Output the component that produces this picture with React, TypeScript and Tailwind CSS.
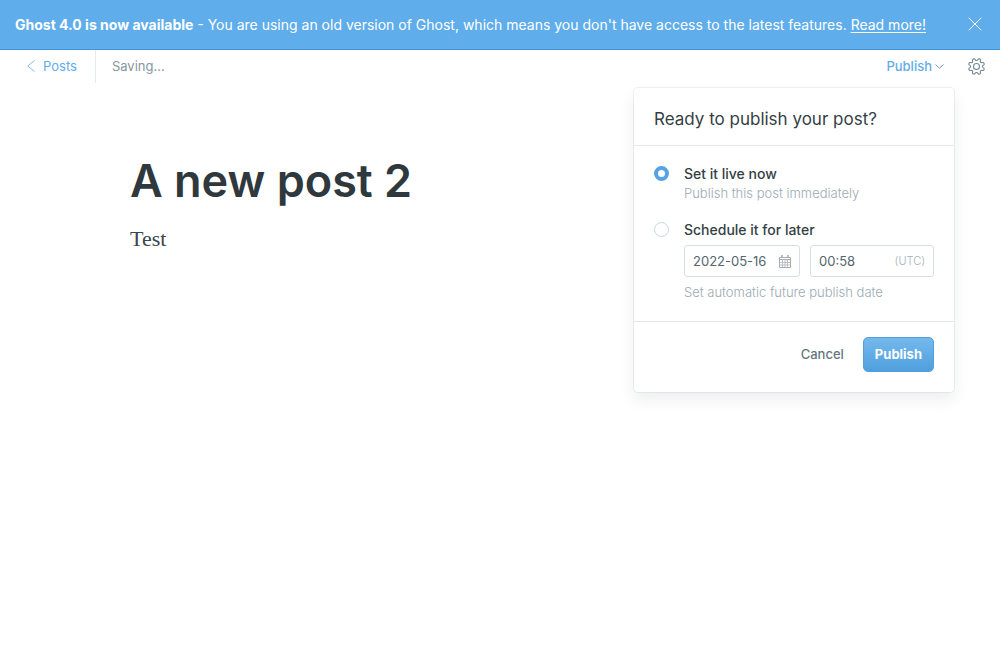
import { useState } from "react";

function gearPath(): string {
  const steps = 96;
  const points: string[] = [];
  for (let i = 0; i < steps; i++) {
    const angle = (i / steps) * Math.PI * 2;
    const wave = Math.cos(8 * (angle + Math.PI / 8));
    const radius = 7.1 + Math.max(-1.1, Math.min(1, wave * 1.7));
    points.push(
      `${(8.5 + radius * Math.cos(angle)).toFixed(2)} ${(8.5 + radius * Math.sin(angle)).toFixed(2)}`,
    );
  }
  return `M${points.join("L")}Z`;
}

const GEAR = gearPath();

function GearIcon() {
  return (
    <svg width="17" height="17" viewBox="0 0 17 17" fill="none" stroke="currentColor" strokeWidth="1.1" aria-hidden="true">
      <path d={GEAR} strokeLinejoin="round" />
      <circle cx="8.5" cy="8.5" r="3" />
    </svg>
  );
}

function CalendarIcon() {
  return (
    <svg width="12" height="13" viewBox="0 0 12 13" fill="none" stroke="currentColor" className="shrink-0" aria-hidden="true">
      <path d="M0.5 2.5H11.5V12.5H0.5ZM0.5 4.5H11.5" />
      <path d="M3 0V3M9 0V3" strokeWidth="1.5" />
      <path d="M3.5 5V12M6 5V12M8.5 5V12M1 7.5H11M1 10H11" strokeWidth="0.7" />
    </svg>
  );
}

function Banner() {
  return (
    <div className="flex h-[50px] items-center justify-between border-b border-[#3e96dc] bg-[#5fadea] pr-[18px] pl-[15px] text-white">
      <p className="text-sm whitespace-nowrap">
        <strong className="font-bold">Ghost 4.0 is now available</strong> - You are using an old version of Ghost, which
        means you don't have access to the latest features.{" "}
        <a href="#update" className="underline underline-offset-2">
          Read more!
        </a>
      </p>
      <button type="button" aria-label="Close" className="shrink-0 pb-px">
        <svg width="14" height="14" viewBox="0 0 14 14" fill="none" stroke="currentColor" strokeLinecap="round">
          <path d="M1 1L13 13M13 1L1 13" />
        </svg>
      </button>
    </div>
  );
}

function PublishMenu() {
  const [mode, setMode] = useState("now");
  const radio =
    "mt-[5px] size-[15px] shrink-0 appearance-none rounded-full border border-[#c5d9e8] bg-white checked:border-4 checked:border-[#55a3e3]";
  const field = "flex h-8 items-center rounded-[3px] border border-[#d3dfe8] bg-white px-2";
  const input = "w-full min-w-0 pt-px text-[13px] text-[#54666d] outline-none";
  const label = "block pt-[2px] text-sm leading-[22px] font-medium text-[#343f44]";
  const hint = "text-[13px] leading-4 font-light text-[#9baab3]";
  return (
    <form
      className="absolute top-full right-[46px] z-10 mt-[5px] w-80 rounded bg-white shadow-[0_0_0_1px_rgba(99,114,130,0.10),0_8px_16px_rgba(27,39,51,0.08)]"
      onSubmit={(event) => event.preventDefault()}
    >
      <h2 className="border-b border-[#e5e9ed] px-5 pt-[19px] pb-[14px] text-[17px] leading-6 text-[#343f44]">
        Ready to publish your post?
      </h2>
      <div className="flex flex-col gap-4 px-5 pt-[15px] pb-[21px]">
        <div className="flex gap-[15px]">
          <input id="now" type="radio" name="mode" checked={mode === "now"} onChange={() => setMode("now")} className={radio} />
          <div>
            <label htmlFor="now" className={label}>
              Set it live now
            </label>
            <p className={hint}>Publish this post immediately</p>
          </div>
        </div>
        <div className="flex gap-[15px]">
          <input id="later" type="radio" name="mode" checked={mode === "later"} onChange={() => setMode("later")} className={radio} />
          <div className="min-w-0 flex-1">
            <label htmlFor="later" className={label}>
              Schedule it for later
            </label>
            <div className="mt-1 flex gap-[10px]">
              <div className={`${field} w-[116px] text-[#a4adb3]`}>
                <input aria-label="Publish date" defaultValue="2022-05-16" className={input} />
                <CalendarIcon />
              </div>
              <div className={`${field} min-w-0 flex-1`}>
                <input aria-label="Publish time" defaultValue="00:58" className={input} />
                <span className="text-[11px] font-light text-[#a4b0b8]">(UTC)</span>
              </div>
            </div>
            <p className={`mt-[7px] ${hint}`}>Set automatic future publish date</p>
          </div>
        </div>
      </div>
      <div className="flex items-center justify-end gap-[19px] border-t border-[#dfe8f0] px-5 pt-[15px] pb-5 text-[13px]">
        <button type="button" className="font-medium text-[#647780]">
          Cancel
        </button>
        <button
          type="submit"
          className="h-[35px] rounded-[5px] border border-[#529fdd] bg-linear-to-b from-[#75b9ed] to-[#4f9fde] px-[11px] font-bold text-white"
        >
          Publish
        </button>
      </div>
    </form>
  );
}

export default function App() {
  return (
    <div className="min-h-screen bg-white font-['Inter',sans-serif]">
      <Banner />
      <header className="relative flex h-[33px] items-center justify-between text-[13px]">
        <div className="flex h-full items-center">
          <a href="#posts" className="flex h-full items-center gap-2 border-r border-[#e5eaee] pr-[18px] pl-[27px] text-[#5fadea]">
            <svg width="8" height="13" viewBox="0 0 8 13" fill="none" stroke="currentColor" strokeWidth="0.8" aria-hidden="true">
              <path d="M7.5 0.5L0.7 6L7.5 11.5" />
            </svg>
            Posts
          </a>
          <span className="pl-4 text-[#8796a0]">Saving...</span>
        </div>
        <div className="flex items-center gap-6 pr-[15px]">
          <button type="button" className="flex items-center gap-[3px] font-medium text-[#5fadea]">
            Publish
            <svg width="9" height="5" viewBox="0 0 9 5" fill="none" stroke="#7796ad" aria-hidden="true">
              <path d="M0.5 0.5L4.5 4.2L8.5 0.5" />
            </svg>
          </button>
          <button type="button" aria-label="Settings" className="text-[#738a94]">
            <GearIcon />
          </button>
        </div>
        <PublishMenu />
      </header>
      <main className="mx-auto max-w-[740px] pt-[67px]">
        <h1 className="text-[45px] leading-[62px] font-semibold text-[#2f383c]">A new post 2</h1>
        <p className="mt-[11px] font-['Georgia','Liberation_Serif',serif] text-[22px] leading-8 text-[#3a464c]">Test</p>
      </main>
    </div>
  );
}
